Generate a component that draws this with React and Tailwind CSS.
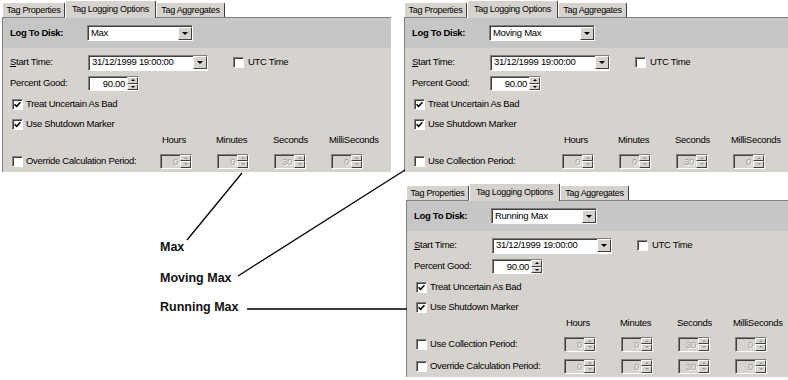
import React from 'react';

const sunken = 'border border-t-[#808080] border-l-[#808080] border-b-white border-r-white shadow-[inset_1px_1px_0_#404040]';
const raised = 'border border-t-white border-l-white border-b-[#404040] border-r-[#404040]';

function Tab({ label, active, w }) {
  return (
    <div
      className={
        active
          ? `${w} h-[18px] -mb-px relative z-10 bg-[#d6d3ce] border-t border-l border-r border-t-white border-l-white border-r-[#404040] rounded-t-[2px] flex items-center justify-center`
          : `${w} h-[15px] bg-[#d6d3ce] border-t border-l border-r border-t-white border-l-white border-r-[#404040] rounded-t-[2px] flex items-center justify-center`
      }
    >
      <span className="text-[9px] tracking-[-0.3px] leading-none">{label}</span>
    </div>
  );
}

function Arrow({ up, disabled }) {
  if (up) {
    return <div className={disabled ? 'w-0 h-0 border-l-[2px] border-r-[2px] border-b-[2px] border-l-transparent border-r-transparent border-b-[#9c9a94]' : 'w-0 h-0 border-l-[2px] border-r-[2px] border-b-[2px] border-l-transparent border-r-transparent border-b-black'} />;
  }
  return <div className={disabled ? 'w-0 h-0 border-l-[2px] border-r-[2px] border-t-[2px] border-l-transparent border-r-transparent border-t-[#9c9a94]' : 'w-0 h-0 border-l-[2px] border-r-[2px] border-t-[2px] border-l-transparent border-r-transparent border-t-black'} />;
}

function Combo({ text, w }) {
  return (
    <div className={`${w} h-[16px] bg-white flex items-center ${sunken}`}>
      <span className="flex-1 pl-[3px] whitespace-nowrap overflow-hidden">{text}</span>
      <div className={`w-[14px] h-[13px] bg-[#d6d3ce] ${raised} flex items-center justify-center`}>
        <div className="w-0 h-0 border-l-[3px] border-r-[3px] border-t-[3px] border-l-transparent border-r-transparent border-t-black" />
      </div>
    </div>
  );
}

function Spin({ value, w, disabled }) {
  return (
    <div className={`${w} h-[15px] flex items-stretch ${sunken} ${disabled ? 'bg-[#d6d3ce] text-[#a09e98]' : 'bg-white text-black'}`}>
      <span className={disabled ? 'flex-1 text-right pr-[2px] leading-[13px] [text-shadow:1px_1px_0_#fff]' : 'flex-1 text-right pr-[2px] leading-[13px]'}>{value}</span>
      <div className="w-[11px] flex flex-col">
        <div className={`flex-1 bg-[#d6d3ce] ${raised} flex items-center justify-center`}>
          <Arrow up disabled={disabled} />
        </div>
        <div className={`flex-1 bg-[#d6d3ce] ${raised} flex items-center justify-center`}>
          <Arrow disabled={disabled} />
        </div>
      </div>
    </div>
  );
}

function Check({ checked }) {
  return (
    <div className={`w-[11px] h-[11px] shrink-0 bg-white ${sunken} flex items-center justify-center`}>
      {checked && (
        <svg width="7" height="7" viewBox="0 0 7 7">
          <path d="M0.5 3.2 L2.6 5.3 L6.5 1.2" fill="none" stroke="#000" strokeWidth="1.6" />
        </svg>
      )}
    </div>
  );
}

const columns = [
  { label: 'Hours', value: '0', cls: 'pl-[2px]' },
  { label: 'Minutes', value: '0', cls: '-ml-[1px]' },
  { label: 'Seconds', value: '30', cls: '-ml-[1px]' },
  { label: 'MilliSeconds', value: '0', cls: '-ml-[2px]' },
];

function Panel({ mode, periods, className }) {
  return (
    <div className={className}>
      <div className="h-[17px] flex items-end">
        <Tab label="Tag Properties" w="w-[63px]" />
        <Tab label="Tag Logging Options" w="w-[91px]" active />
        <Tab label="Tag Aggregates" w="w-[69px]" />
      </div>
      <div className="border-t border-l border-[#808080] bg-[#d6d3ce] text-[9.5px] tracking-[-0.3px] text-black">
        <div className="h-[30px] bg-[#c6c6c6] flex items-center pl-[7px]">
          <span className="w-[77px] font-bold">Log To Disk:</span>
          <Combo text={mode} w="w-[106px]" />
        </div>
        <div className="pl-[7px] pt-[4px]">
          <div className="h-[21px] flex items-center">
            <span className="w-[78px]"><u>S</u>tart Time:</span>
            <Combo text="31/12/1999 19:00:00" w="w-[120px]" />
            <div className="ml-[25px] flex items-center gap-[4px]">
              <Check />
              <span>UTC Time</span>
            </div>
          </div>
          <div className="h-[21px] flex items-center">
            <span className="w-[78px]">Percent Good:</span>
            <Spin value="90.00" w="w-[51px]" />
          </div>
          <div className="h-[20px] flex items-center gap-[3px] pl-[2px]">
            <Check checked />
            <span>Treat Uncertain As Bad</span>
          </div>
          <div className="h-[20px] flex items-center gap-[3px] pl-[2px]">
            <Check checked />
            <span>Use Shutdown Marker</span>
          </div>
          <div className="h-[12px] flex items-center pl-[150px]">
            {columns.map((c) => (
              <div key={c.label} className="w-[57px]">
                <span className={`block ${c.cls}`}>{c.label}</span>
              </div>
            ))}
          </div>
          <div className="mt-[4px]">
            {periods.map((p) => (
              <div key={p} className="h-[22px] flex items-center">
                <div className="w-[150px] flex items-center gap-[3px] pl-[2px]">
                  <Check />
                  <span>{p}</span>
                </div>
                {columns.map((c) => (
                  <div key={c.label} className="w-[57px]">
                    <Spin value={c.value} w="w-[32px]" disabled />
                  </div>
                ))}
              </div>
            ))}
          </div>
        </div>
      </div>
    </div>
  );
}

export default function App() {
  return (
    <div className="relative w-[788px] h-[380px] bg-white overflow-hidden flex font-['Liberation_Sans',Arial,sans-serif]">
      <div className="w-[404px] shrink-0 pl-[2px]">
        <Panel mode="Max" periods={['Override Calculation Period:']} className="w-[389px] pb-[3px]" />
        <div className="pl-[158px] text-[12.5px] font-bold leading-[16px] text-[#111]">
          <div className="mt-[64px]">Max</div>
          <div className="mt-[15px]">Moving Max</div>
          <div className="mt-[13px]">Running Max</div>
        </div>
      </div>
      <div className="flex-1 flex flex-col">
        <Panel mode="Moving Max" periods={['Use Collection Period:']} className="w-full" />
        <Panel
          mode="Running Max"
          periods={['Use Collection Period:', 'Override Calculation Period:']}
          className="mt-[11px] ml-[2px] pb-[3px]"
        />
      </div>
      <svg className="absolute inset-0 pointer-events-none" width="788" height="380">
        <line x1="187" y1="240" x2="242" y2="173" stroke="#000" strokeWidth="1.3" />
        <line x1="238" y1="276" x2="405" y2="170" stroke="#000" strokeWidth="1.3" />
        <line x1="247" y1="309" x2="407" y2="309" stroke="#000" strokeWidth="1.3" />
      </svg>
    </div>
  );
}
